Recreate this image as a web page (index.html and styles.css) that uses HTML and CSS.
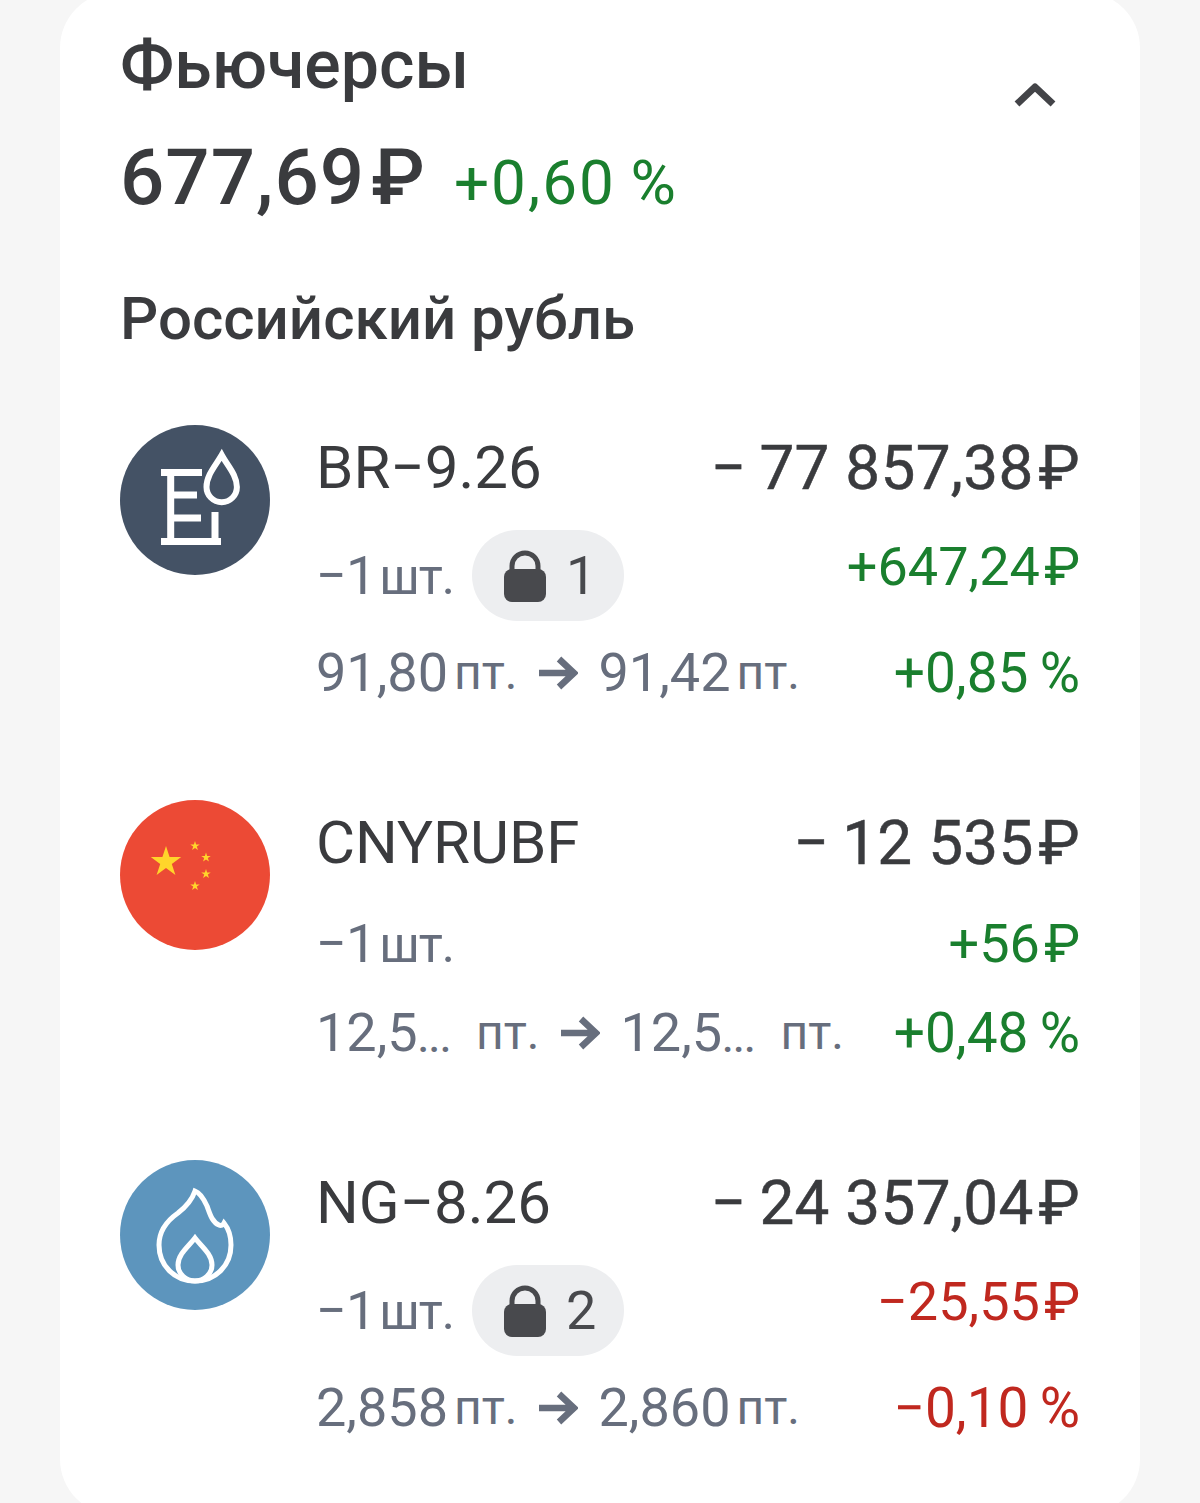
FILE: index.html
```html
<!DOCTYPE html>
<html lang="ru">
  <head>
    <meta charset="UTF-8" />
    <meta name="viewport" content="width=device-width, initial-scale=1.0" />
    <title>Фьючерсы</title>
    <link rel="stylesheet" href="styles.css">
  </head>
  <body>
    <svg class="defs" width="0" height="0">
      <defs>
        <polygon id="star" points="0,-1 .2245,-.309 .951,-.309 .363,.118 .588,.809 0,.382 -.588,.809 -.363,.118 -.951,-.309 -.2245,-.309" />
        <g id="lock">
          <path d="M8 23V16a13 13 0 0 1 26 0v7" fill="none" stroke="#48494d" stroke-width="5" />
          <rect x="0" y="19" width="42" height="33" rx="8" fill="#48494d" />
        </g>
        <path id="arrow" d="M1 17h34M21 3l15 14-15 14" fill="none" stroke="#676e7d" stroke-width="6.5" />
      </defs>
    </svg>

    <div class="card">
      <!-- Header -->
      <div class="card-head">
        <div>
          <h1 class="title">Фьючерсы</h1>
          <div class="total">
            <span class="total-sum">677,69<span class="rub">₽</span></span>
            <span class="total-pct green">+0,60&#8201;%</span>
          </div>
        </div>
        <svg class="chevron" viewBox="0 0 42 24"><path d="M3 21L21 4l18 17" /></svg>
      </div>

      <h2 class="section-label">Российский рубль</h2>

      <!-- Positions -->
      <div class="position">
        <svg class="pos-icon" viewBox="0 0 150 150">
          <circle cx="75" cy="75" r="75" fill="#445265" />
          <path class="glyph" stroke-width="7" d="M41 47.5h41M50.7 47.5v69M51 70h26M51 93h30M41 116.5h60M95 87v29.500" />
          <path class="glyph" stroke-width="6" d="M101.700 30C96 40 86.500 50 86.500 62a15.200 15.200 0 0 0 30.400 0C116.900 50 107 40 101.700 30Z" />
        </svg>
        <div class="pos-body">
          <div class="line line-name">
            <span>BR−9.26</span>
            <span class="sum">−&#8201;77 857,38<span class="rub">₽</span></span>
          </div>
          <div class="line line-qty">
            <span class="qty">
              <span class="qty-num">−1<small>шт.</small></span>
              <span class="pill">
                <svg class="lock" viewBox="0 0 42 52"><use href="#lock" /></svg>
                1
              </span>
            </span>
            <span class="profit raised green">+647,24<span class="rub">₽</span></span>
          </div>
          <div class="line line-price">
            <span class="prices">91,80<small>пт.</small><svg class="arrow" viewBox="0 0 40 34"><use href="#arrow" /></svg>91,42<small>пт.</small></span>
            <span class="pct green">+0,85&#8201;%</span>
          </div>
        </div>
      </div>

      <div class="position">
        <svg class="pos-icon" viewBox="0 0 150 150">
          <circle cx="75" cy="75" r="75" fill="#ec4a35" />
          <g fill="#ffd52b">
            <use href="#star" transform="translate(46 62) scale(16)" />
            <use href="#star" transform="translate(75 46) scale(5)" />
            <use href="#star" transform="translate(86 57.500) scale(5)" />
            <use href="#star" transform="translate(86 74) scale(5)" />
            <use href="#star" transform="translate(75 86) scale(5)" />
          </g>
        </svg>
        <div class="pos-body">
          <div class="line line-name">
            <span>CNYRUBF</span>
            <span class="sum">−&#8201;12 535<span class="rub">₽</span></span>
          </div>
          <div class="line line-qty line-plain">
            <span class="qty">
              <span class="qty-num">−1<small>шт.</small></span>
            </span>
            <span class="profit green">+56<span class="rub">₽</span></span>
          </div>
          <div class="line line-price">
            <span class="prices">12,5<i class="cut">...</i><small class="wide">пт.</small><svg class="arrow" viewBox="0 0 40 34"><use href="#arrow" /></svg>12,5<i class="cut">...</i><small class="wide">пт.</small></span>
            <span class="pct green">+0,48&#8201;%</span>
          </div>
        </div>
      </div>

      <div class="position">
        <svg class="pos-icon" viewBox="0 0 150 150">
          <circle cx="75" cy="75" r="75" fill="#5d95bd" />
          <path class="glyph" stroke-width="5" d="M75 31C78 32 83 37 87 46C90 54 92 62 99 65C101 66 103 65 104 63C108 68 111 76 111 85C111 106 95 121 75 121C55 121 39 106 39 85C39 70 48 60 58 53C67 46 72 40 75 31Z" />
          <path class="glyph" stroke-width="5" d="M75 78C69 86 58 94 58 105C58 114 66 121 75 121C84 121 92 114 92 105C92 94 81 86 75 78Z" />
        </svg>
        <div class="pos-body">
          <div class="line line-name">
            <span>NG−8.26</span>
            <span class="sum">−&#8201;24 357,04<span class="rub">₽</span></span>
          </div>
          <div class="line line-qty">
            <span class="qty">
              <span class="qty-num">−1<small>шт.</small></span>
              <span class="pill">
                <svg class="lock" viewBox="0 0 42 52"><use href="#lock" /></svg>
                2
              </span>
            </span>
            <span class="profit raised red">−25,55<span class="rub">₽</span></span>
          </div>
          <div class="line line-price">
            <span class="prices">2,858<small>пт.</small><svg class="arrow" viewBox="0 0 40 34"><use href="#arrow" /></svg>2,860<small>пт.</small></span>
            <span class="pct red">−0,10&#8201;%</span>
          </div>
        </div>
      </div>
    </div>
  </body>
</html>
```

FILE: styles.css
```css
html,
body {
  height: 100%;
}

body {
  font-family: Roboto, "Noto Sans", sans-serif;
  margin: 0;
  background-color: #f6f6f6;
  color: #3a3b3e;
  overflow: hidden;
}

.defs {
  position: absolute;
}

.card {
  background-color: white;
  margin: -8px 60px 0;
  height: 1523px;
  padding: 35px 60px 0;
  border-radius: 56px;
  box-sizing: border-box;
}

.green {
  color: #1a7f2e;
}

.red {
  color: #c0281f;
}

.rub {
  margin-left: 0.08em;
}

/* Header */
.card-head {
  display: flex;
  justify-content: space-between;
  align-items: flex-start;
}

.title {
  font-size: 68px;
  line-height: 76px;
  font-weight: 500;
  margin: 0;
}

.total {
  display: flex;
  align-items: baseline;
  gap: 28px;
  margin-top: 30px;
  line-height: 90px;
}

.total-sum {
  font-size: 78px;
  font-weight: 500;
  letter-spacing: 1px;
}

.total-pct {
  font-size: 62px;
  letter-spacing: 2px;
}

.chevron {
  width: 42px;
  height: 24px;
  margin: 56px 24px 0 0;
  fill: none;
  stroke: #434448;
  stroke-width: 7;
  stroke-linejoin: round;
}

.section-label {
  font-size: 60px;
  line-height: 70px;
  font-weight: 500;
  margin: 56px 0 71px;
}

/* Position rows */
.position {
  display: flex;
  gap: 46px;
  margin-bottom: 91px;
}

.pos-icon {
  width: 150px;
  height: 150px;
  flex-shrink: 0;
}

.glyph {
  fill: none;
  stroke: white;
}

.pos-body {
  flex: 1;
}

.line {
  display: flex;
  justify-content: space-between;
  align-items: center;
  white-space: nowrap;
}

.line-name {
  font-size: 60px;
  line-height: 85px;
}

.sum {
  font-size: 62px;
  letter-spacing: 0.300px;
  -webkit-text-stroke: 0.500px currentColor;
}

.line-qty {
  font-size: 54px;
  margin-top: 20px;
  height: 91px;
}

.line-plain {
  height: 76px;
}

.profit {
  font-size: 54px;
}

/* next to a pill the amount sits above the row's middle */
.profit.raised {
  margin-bottom: 18px;
}

.line-price {
  font-size: 54px;
  line-height: 72px;
  margin-top: 16px;
}

.pct {
  font-size: 55px;
}

.qty,
.prices {
  display: flex;
  align-items: center;
  color: #676e7d;
}

.qty {
  gap: 18px;
}

.qty-num {
  letter-spacing: -1px;
}

.qty-num small {
  font-size: 50px;
  margin-left: 4px;
}

.pill {
  display: flex;
  align-items: center;
  gap: 20px;
  height: 91px;
  padding: 0 28px 0 32px;
  background-color: #edeef0;
  border-radius: 46px;
  color: #48494d;
}

.lock {
  width: 42px;
  height: 52px;
}

.prices small {
  font-size: 48px;
  margin-left: 6px;
}

.prices small.wide {
  margin-left: 25px;
}

.cut {
  font-style: normal;
  font-weight: 500;
  font-size: 40px;
  align-self: flex-end;
  line-height: 60px;
}

.arrow {
  width: 40px;
  height: 34px;
  margin: 0 20px 0 21px;
}
```
